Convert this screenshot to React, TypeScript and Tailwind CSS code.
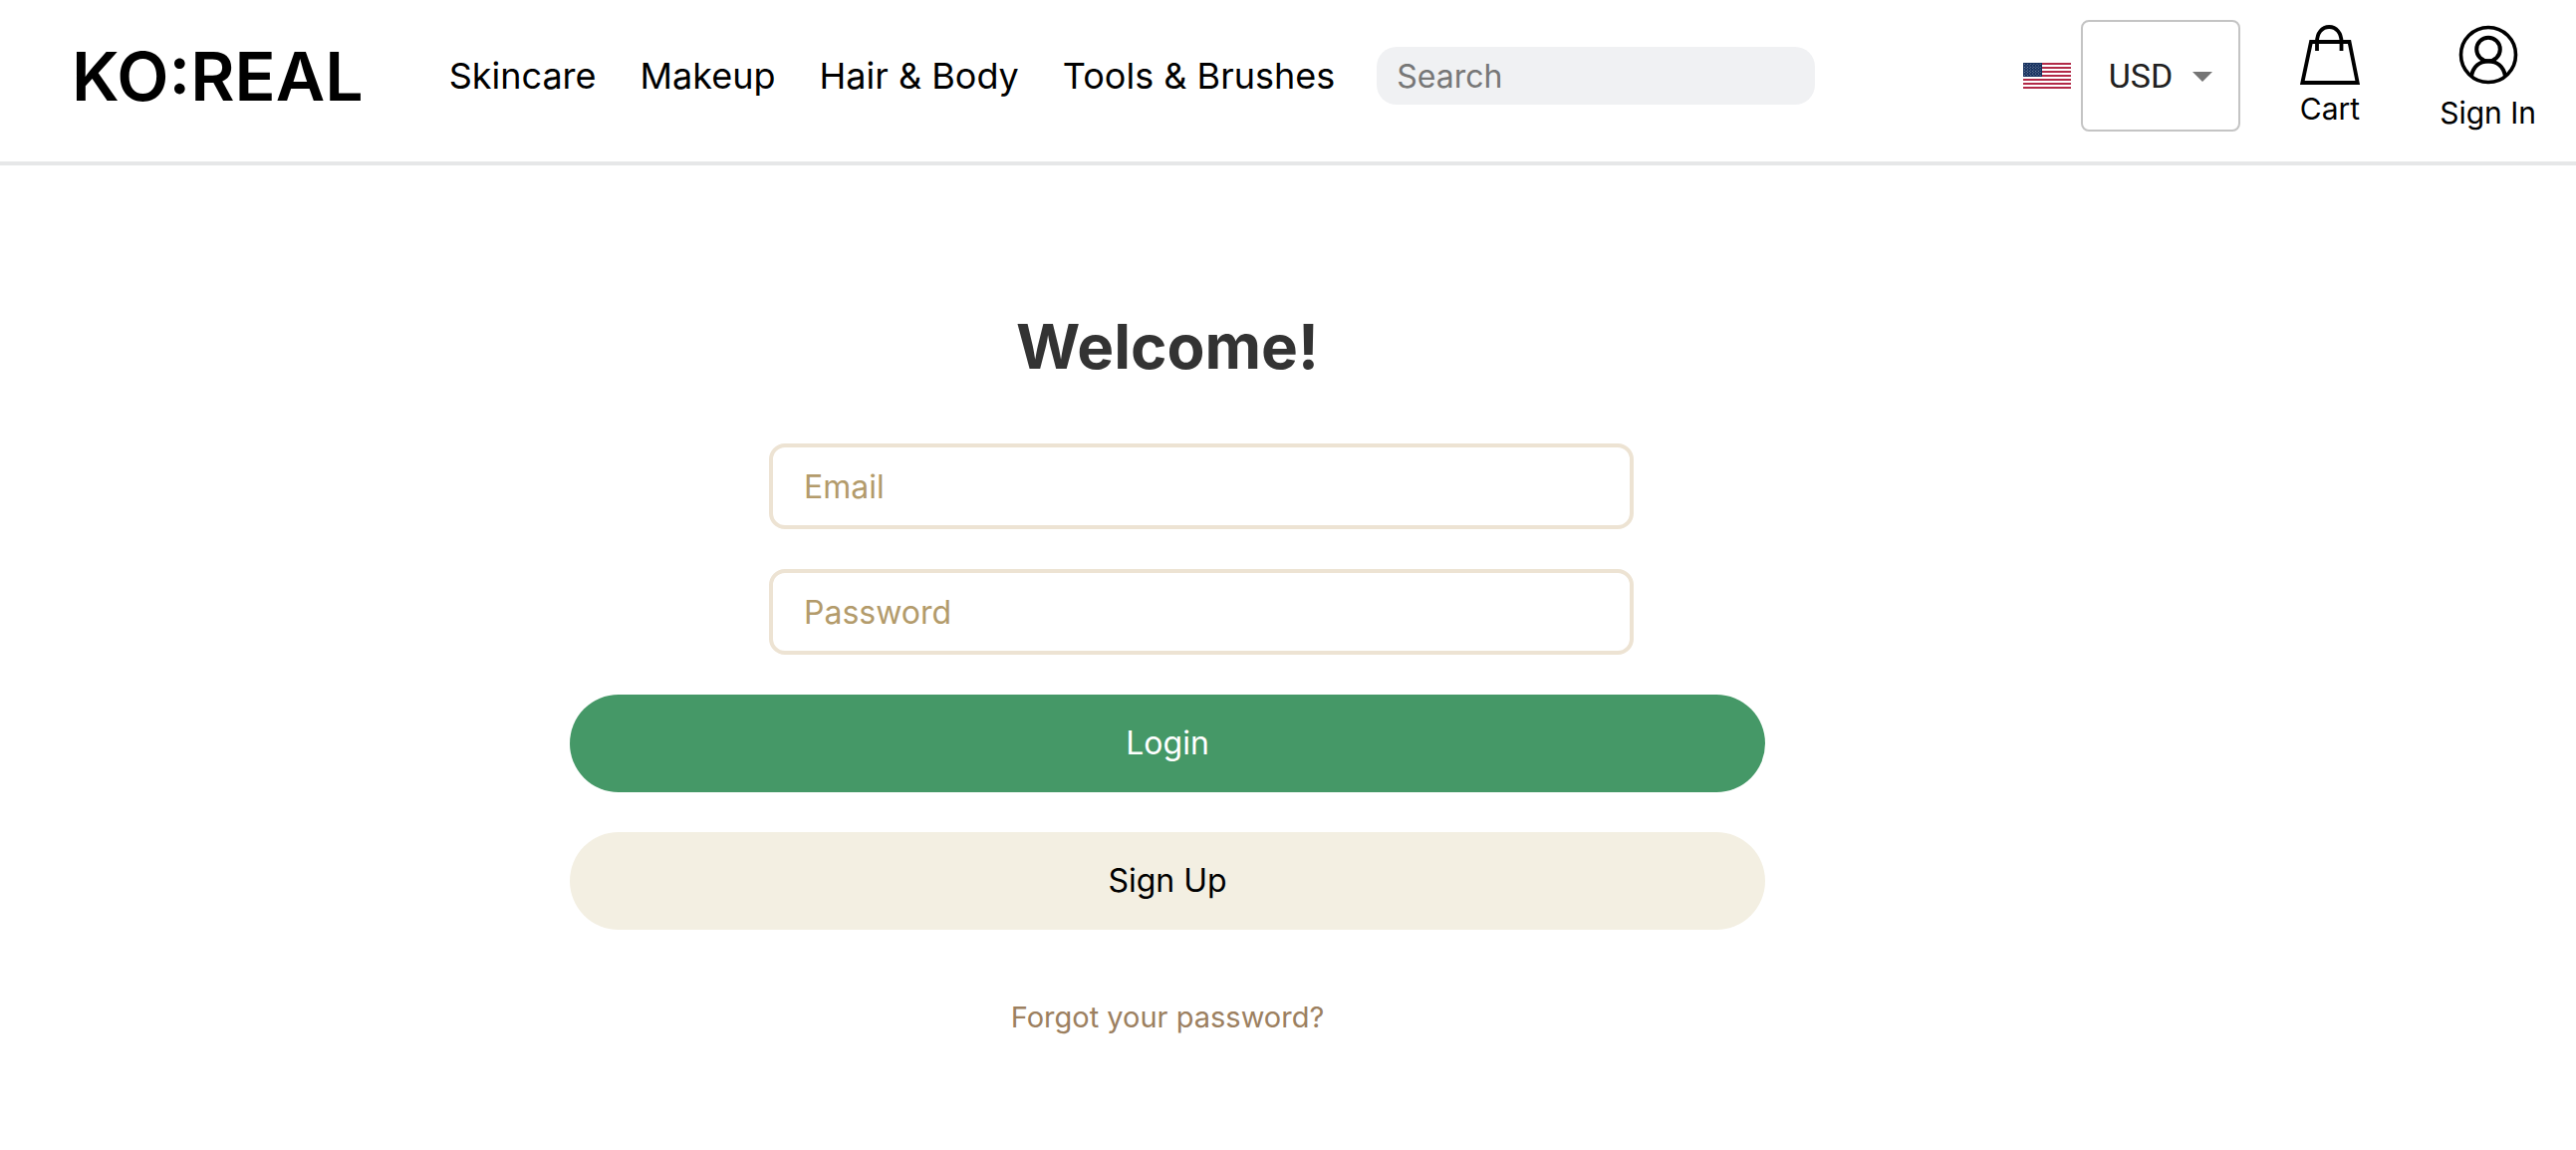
import React from "react";

const links = ["Skincare", "Makeup", "Hair & Body", "Tools & Brushes"];
const stripes = [0, 2, 4, 6, 8, 10, 12];
const stars = Array.from({ length: 50 }, (_, i) => {
  const pair = Math.floor(i / 11);
  const k = i % 11;
  return k < 6
    ? { x: 1.6 + k * 3.1, y: 1.6 + pair * 2.7 }
    : { x: 3.1 + (k - 6) * 3.1, y: 2.9 + pair * 2.7 };
});

function Flag() {
  return (
    <svg viewBox="0 0 48 26" className="h-[26px] w-12 shrink-0" role="img" aria-label="United States">
      <rect width="48" height="26" fill="#fff" />
      {stripes.map((s) => (
        <rect key={s} y={s * 2} width="48" height="2" fill="#b22a48" />
      ))}
      <rect width="19" height="14" fill="#16315f" />
      {stars.map((s, i) => (
        <circle key={i} cx={s.x} cy={s.y} r="0.45" fill="#fff" fillOpacity="0.85" />
      ))}
    </svg>
  );
}

function BagIcon() {
  return (
    <svg viewBox="0 0 60 60" className="size-[60px]" fill="none" stroke="#000" strokeWidth="3.8" aria-hidden="true">
      <path d="M11 17H49.500L57.700 58H2.300Z" />
      <path d="M17 26V17C17 8 22 2 29.200 2S41.500 8 41.500 17V26" />
    </svg>
  );
}

function UserIcon() {
  return (
    <svg viewBox="0 0 60 60" className="size-[60px]" fill="none" stroke="#000" aria-hidden="true">
      <circle cx="30" cy="30" r="27.500" strokeWidth="3.6" />
      <circle cx="30" cy="24.500" r="11.800" strokeWidth="4" />
      <path d="M13 51C15 42 21 36.500 30 36.500S45 42 47 51" strokeWidth="4" />
    </svg>
  );
}

export default function App() {
  const field =
    "h-[86px] w-full rounded-2xl border-4 border-[#ede3d3] bg-white px-[31px] text-[32px] text-[#b39b6b] outline-none placeholder:text-[#b39b6b]";
  const pill = "h-[98px] w-full rounded-full text-[32px]";
  return (
    <div className="min-h-screen bg-white font-['Inter',sans-serif] text-black">
      <header className="flex items-center justify-between border-b-4 border-[#e6e7e8] pb-2.5 pr-10 pl-[72px]">
        <div className="flex items-center">
          <a href="#" className="mr-[86px] text-[68px] leading-[152px] font-semibold">KO:REAL</a>
          <nav className="flex items-center gap-11 text-[36px] whitespace-nowrap">
            {links.map((l) => (
              <a key={l} href="#">{l}</a>
            ))}
          </nav>
          <input
            type="search"
            aria-label="Search"
            placeholder="Search"
            className="ml-[42px] h-[58px] w-[440px] rounded-[20px] bg-[#f0f1f3] px-5 text-[32px] outline-none placeholder:text-[#777777]"
          />
        </div>
        <div className="flex items-center">
          <Flag />
          <div className="relative ml-2.5">
            <select
              aria-label="Currency"
              className="h-28 w-40 appearance-none rounded-lg border-2 border-[#c4c4c4] bg-white pl-[26px] font-['Roboto',sans-serif] text-[34px] text-[#212121]"
            >
              <option>USD</option>
            </select>
            <svg viewBox="0 0 20 10" className="pointer-events-none absolute top-[52px] right-7 h-2.5 w-5" aria-hidden="true">
              <path d="M0 0H20L10 10Z" fill="#757575" />
            </svg>
          </div>
          <div className="ml-[60px] flex items-start gap-20 pt-1.5 text-[30px] leading-10 whitespace-nowrap">
            <a href="#" className="flex flex-col items-center gap-1">
              <BagIcon />
              Cart
            </a>
            <a href="#" className="flex flex-col items-center gap-2">
              <UserIcon />
              Sign In
            </a>
          </div>
        </div>
      </header>
      <main className="flex justify-center pr-[242px] pt-[142px]">
        <form className="flex w-full max-w-[1200px] flex-col items-center" onSubmit={(e) => e.preventDefault()}>
          <h1 className="text-[62px] leading-20 font-bold text-[#333333]">Welcome!</h1>
          <div className="mt-[57px] w-full space-y-10 pr-[132px] pl-[200px]">
            <input type="email" aria-label="Email" placeholder="Email" className={field} />
            <input type="password" aria-label="Password" placeholder="Password" className={field} />
          </div>
          <button type="submit" className={pill + " mt-10 bg-[#459867] text-white"}>Login</button>
          <button type="button" className={pill + " mt-10 bg-[#f3efe2]"}>Sign Up</button>
          <a href="#" className="mt-[68px] text-[29px] leading-10 text-[#9c8060]">Forgot your password?</a>
        </form>
      </main>
    </div>
  );
}
